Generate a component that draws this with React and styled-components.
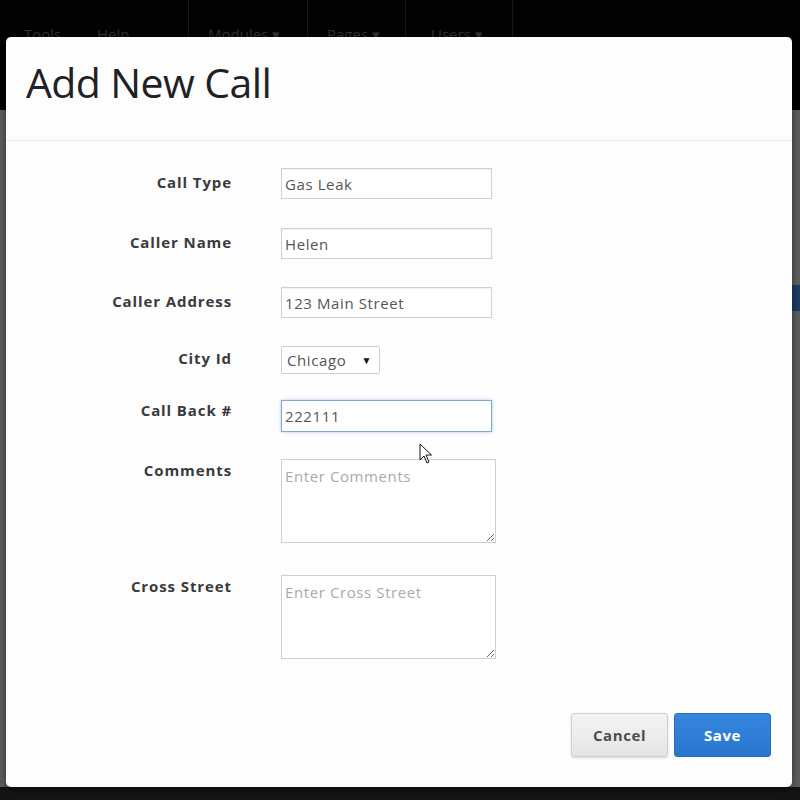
import React from "react";
import styled, { createGlobalStyle } from "styled-components";

const GlobalStyle = createGlobalStyle`
  html, body {
    margin: 0;
    padding: 0;
    background: #141414;
  }
  * {
    box-sizing: border-box;
  }
`;

const font = `"Open Sans", "Noto Sans", "Liberation Sans", sans-serif`;

const Page = styled.div`
  position: relative;
  width: 800px;
  height: 800px;
  overflow: hidden;
  display: flex;
  flex-direction: column;
  font-family: ${font};
  background: #141414;
`;

const NavBar = styled.div`
  height: 110px;
  flex-shrink: 0;
  background: #020202;
  display: flex;
  align-items: flex-start;
  padding-left: 24px;
`;

const NavItem = styled.div`
  width: ${(p) => p.$w}px;
  height: 110px;
  padding: 24px 0 0 ${(p) => p.$pad ?? 0}px;
  color: #333;
  font-size: 15px;
  border-left: ${(p) => (p.$divided ? "1px solid #181818" : "none")};
`;

const NavEnd = styled.div`
  height: 110px;
  border-left: 1px solid #181818;
`;

const Backdrop = styled.div`
  flex: 1;
  background: #5e5e5e;
  display: flex;
  justify-content: flex-end;
`;

const SideStrip = styled.div`
  width: 8px;
  display: flex;
  flex-direction: column;
  padding-top: 175px;
`;

const BlueBit = styled.div`
  height: 26px;
  background: #1e3c66;
`;

const Footer = styled.div`
  height: 13px;
  flex-shrink: 0;
  background: #141414;
`;

const Modal = styled.div`
  position: absolute;
  left: 6px;
  top: 37px;
  width: 786px;
  height: 750px;
  background: #fdfdfe;
  border-radius: 5px;
  box-shadow: 0 2px 8px rgba(0, 0, 0, 0.5);
  display: flex;
  flex-direction: column;
`;

const Header = styled.div`
  height: 104px;
  padding: 17px 20px 0;
  border-bottom: 1px solid #e8e8ea;
`;

const Title = styled.h1`
  margin: 0;
  font-family: ${font};
  font-weight: 400;
  font-size: 41px;
  letter-spacing: -0.6px;
  color: #1e2226;
`;

const Body = styled.div`
  flex: 1;
  padding: 27px 0 0;
  display: grid;
  grid-template-columns: 226px 1fr;
  column-gap: 49px;
  align-content: start;
`;

const Label = styled.div`
  text-align: right;
  font-size: 15px;
  font-weight: 700;
  letter-spacing: 0.9px;
  color: #3a3a3a;
  padding-top: ${(p) => p.$top ?? 4}px;
`;

const Field = styled.div`
  margin-bottom: ${(p) => p.$gap}px;
`;

const Input = styled.input`
  display: block;
  width: 211px;
  height: ${(p) => p.$h || 31}px;
  padding: 0 3px;
  font-family: ${font};
  font-size: 15px;
  letter-spacing: 0.6px;
  color: #555;
  background: #fff;
  border: 1px solid ${(p) => (p.$focus ? "#7ea7da" : "#d0d0d0")};
  box-shadow: ${(p) =>
    p.$focus ? "0 0 3px rgba(80, 140, 220, 0.45)" : "inset 0 1px 1px rgba(0,0,0,0.06)"};
  outline: none;
`;

const SelectBox = styled.div`
  width: 99px;
  height: 28px;
  border: 1px solid #cfcfcf;
  border-radius: 2px;
  background: #fff;
  display: flex;
  align-items: center;
  justify-content: space-between;
  padding: 0 7px 0 5px;
  font-size: 15px;
  letter-spacing: 0.6px;
  color: #555;
`;

const Arrow = styled.span`
  font-size: 10px;
  color: #111;
`;

const TextArea = styled.textarea`
  display: block;
  width: 215px;
  height: 84px;
  padding: 6px 3px 3px;
  font-family: ${font};
  font-size: 15px;
  letter-spacing: 0.6px;
  color: #555;
  border: 1px solid #cfcfcf;
  background: #fff;
  outline: none;
  resize: both;
  &::placeholder {
    color: #aaa;
  }
`;

const Footerbar = styled.div`
  display: flex;
  justify-content: flex-end;
  gap: 6px;
  padding: 0 21px 30px;
`;

const Button = styled.button`
  width: 97px;
  height: 44px;
  font-family: ${font};
  font-size: 15px;
  font-weight: 700;
  letter-spacing: 0.6px;
  border-radius: 3px;
  cursor: pointer;
`;

const CancelButton = styled(Button)`
  color: #4d4d4d;
  background: linear-gradient(#f4f4f4, #e4e4e4);
  border: 1px solid #cfcfcf;
  box-shadow: 0 1px 2px rgba(0, 0, 0, 0.15);
`;

const SaveButton = styled(Button)`
  color: #fff;
  background: linear-gradient(#3586dd, #2b76cf);
  border: 1px solid #2a6dbe;
`;

const Cursor = styled.svg`
  position: absolute;
  left: 419px;
  top: 443px;
`;

export default function App() {
  return (
    <>
      <GlobalStyle />
      <Page>
        <NavBar>
          <NavItem $w={73}>Tools</NavItem>
          <NavItem $w={91}>Help</NavItem>
          <NavItem $divided $w={119} $pad={19}>Modules ▾</NavItem>
          <NavItem $divided $w={98} $pad={19}>Pages ▾</NavItem>
          <NavItem $divided $w={107} $pad={25}>Users ▾</NavItem>
          <NavEnd />
        </NavBar>
        <Backdrop>
          <SideStrip>
            <BlueBit />
          </SideStrip>
        </Backdrop>
        <Footer />
        <Modal>
          <Header>
            <Title>Add New Call</Title>
          </Header>
          <Body>
            <Label>Call Type</Label>
            <Field $gap={29}>
              <Input defaultValue="Gas Leak" />
            </Field>
            <Label>Caller Name</Label>
            <Field $gap={28}>
              <Input defaultValue="Helen" />
            </Field>
            <Label>Caller Address</Label>
            <Field $gap={28}>
              <Input defaultValue="123 Main Street" />
            </Field>
            <Label $top={2}>City Id</Label>
            <Field $gap={26}>
              <SelectBox>
                Chicago <Arrow>▼</Arrow>
              </SelectBox>
            </Field>
            <Label $top={0}>Call Back #</Label>
            <Field $gap={27}>
              <Input $focus $h={32} defaultValue="222111" />
            </Field>
            <Label $top={1}>Comments</Label>
            <Field $gap={32}>
              <TextArea placeholder="Enter Comments" />
            </Field>
            <Label $top={1}>Cross Street</Label>
            <Field $gap={0}>
              <TextArea placeholder="Enter Cross Street" />
            </Field>
          </Body>
          <Footerbar>
            <CancelButton>Cancel</CancelButton>
            <SaveButton>Save</SaveButton>
          </Footerbar>
        </Modal>
        <Cursor width="14" height="22" viewBox="0 0 14 22">
          <path
            d="M1 1 L1 17 L5 13 L8 20 L10 19 L7 12 L12.5 12 Z"
            fill="#fff"
            stroke="#111"
            strokeWidth="1"
            strokeLinejoin="round"
          />
        </Cursor>
      </Page>
    </>
  );
}
